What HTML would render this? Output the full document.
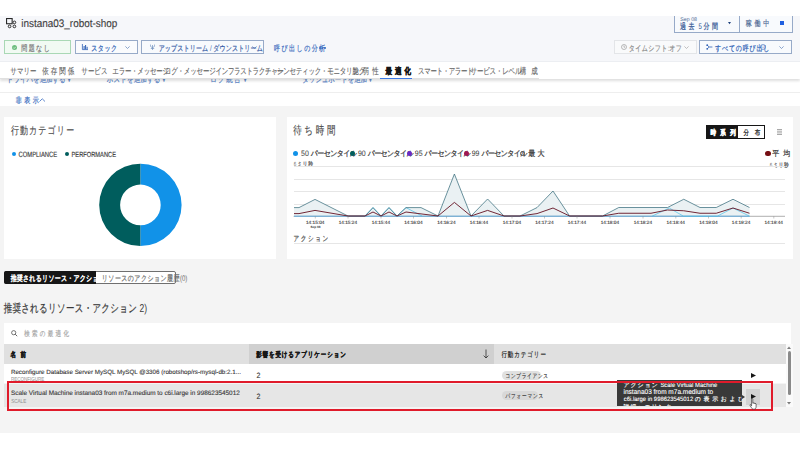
<!DOCTYPE html>
<html><head><meta charset="utf-8">
<style>
*{box-sizing:border-box;margin:0;padding:0}
html,body{width:800px;height:450px;overflow:hidden;background:#fff;font-family:"Liberation Sans",sans-serif;color:#161616}
.a{position:absolute;white-space:nowrap;line-height:1;text-rendering:geometricPrecision}
svg.a{overflow:visible}
</style></head><body>
<div class="a" style="left:0px;top:16px;width:800px;height:45px;background:#f6f7fa;"></div>
<svg class="a" style="left:6.2px;top:17.6px" width="10" height="10" viewBox="0 0 10 10">
  <rect x="0.55" y="0.55" width="5.6" height="5.2" fill="none" stroke="#2a2a2a" stroke-width="1.1"/>
  <circle cx="8.4" cy="4.4" r="1.35" fill="none" stroke="#2a2a2a" stroke-width="1"/>
  <circle cx="3.6" cy="8.4" r="1.35" fill="none" stroke="#2a2a2a" stroke-width="1"/>
  <circle cx="8.4" cy="8.4" r="1.35" fill="none" stroke="#2a2a2a" stroke-width="1"/>
</svg>
<div class="a" id="t1" style="left:21.234px;top:20px;font-size:9.95px;color:#3d3d3d;transform:scaleY(1.1);transform-origin:0 3.577px;-webkit-text-stroke-width:0.1px;">instana03_robot-shop</div>
<div class="a" style="left:673.5px;top:16px;width:119px;height:17px;background:#f8fafd;border:1px solid #97aac8;border-top:none;"></div>
<div class="a" style="left:739px;top:16px;width:1px;height:17px;background:#97aac8;"></div>
<div class="a" id="t2" style="left:680.361px;top:18px;font-size:5.274px;color:#4f6a95;">Sep 08</div>
<div class="a" id="t3" style="left:679.999px;top:24px;font-size:6px;color:#2a4f8f;transform:scaleY(1.35);transform-origin:0 1.936px;"><span style="letter-spacing:2.44px;-webkit-text-stroke-width:0.15px">過去</span> 5 <span style="letter-spacing:2.44px;-webkit-text-stroke-width:0.15px">分間</span></div>
<svg class="a" style="left:727.5px;top:21.6px" width="3" height="2.2" viewBox="0 0 3 2.2"><path d="M0 0h3L1.5 2.2Z" fill="#1c3f7a"/></svg>
<div class="a" id="t4" style="left:745.799px;top:21px;font-size:6px;color:#4f6a95;transform:scaleY(1.35);transform-origin:0 1.936px;"><span style="letter-spacing:2.774px;-webkit-text-stroke-width:0.15px">稼働中</span></div>
<div class="a" style="left:780.2px;top:20.9px;width:3.7px;height:3.8px;background:#1f5fe0;"></div>
<div class="a" style="left:4px;top:40.2px;width:67px;height:13.8px;background:#f1faf3;border:1px solid #a9d8b5;"></div>
<svg class="a" style="left:11.6px;top:44.9px" width="5" height="5" viewBox="0 0 5 5"><circle cx="2.5" cy="2.5" r="2.5" fill="#6cbd7e"/><path d="M1.3 2.6l0.9 0.9 1.6-1.7" stroke="#fff" stroke-width="0.6" fill="none"/></svg>
<div class="a" id="t5" style="left:21.299px;top:46px;font-size:6px;color:#777;transform:scaleY(1.35);transform-origin:0 1.936px;"><span style="letter-spacing:1.398px;-webkit-text-stroke-width:0.15px">問題なし</span></div>
<div class="a" style="left:74.6px;top:40.2px;width:63.6px;height:13.8px;background:#fafbfd;border:1px solid #97aac8;"></div>
<svg class="a" style="left:81.5px;top:44.3px" width="6" height="6" viewBox="0 0 6 6"><path d="M0.4 0v5.6h5.6" stroke="#2d5fb5" stroke-width="0.8" fill="none"/><rect x="1.6" y="2" width="1" height="3.2" fill="#2d5fb5"/><rect x="3.1" y="1" width="1" height="4.2" fill="#2d5fb5"/><rect x="4.6" y="2.8" width="1" height="2.4" fill="#2d5fb5"/></svg>
<div class="a" id="t6" style="left:91.299px;top:46px;font-size:6px;color:#2d5fb5;transform:scaleY(1.35);transform-origin:0 1.936px;"><span style="letter-spacing:0.431px;-webkit-text-stroke-width:0.15px">スタック</span></div>
<svg class="a" style="left:125.2px;top:45.8px" width="5" height="3" viewBox="0 0 5 3"><path d="M0.4 0.4l2.1 2.1 2.1-2.1" stroke="#5a7fb8" stroke-width="0.7" fill="none"/></svg>
<div class="a" style="left:141.2px;top:40.2px;width:123.3px;height:13.8px;background:#f8fafd;border:1px solid #97aac8;"></div>
<svg class="a" style="left:150px;top:44.3px" width="5" height="6" viewBox="0 0 5 6"><path d="M2.5 1v5M0.5 0.6v1.2c0 1 .9 1.6 2 1.6s2-.6 2-1.6V0.6M0.8 4.5h3.4" stroke="#6f8fbf" stroke-width="0.7" fill="none"/></svg>
<div class="a" id="t7" style="left:158.649px;top:46px;font-size:6px;color:#3d62a8;transform:scaleY(1.35);transform-origin:0 1.936px;"><span style="letter-spacing:0.078px;-webkit-text-stroke-width:0.15px">アップストリーム</span> / <span style="letter-spacing:0.078px;-webkit-text-stroke-width:0.15px">ダウンストリーム</span></div>
<svg class="a" style="left:251.5px;top:45.8px" width="5" height="3" viewBox="0 0 5 3"><path d="M0.4 0.4l2.1 2.1 2.1-2.1" stroke="#5a7fb8" stroke-width="0.7" fill="none"/></svg>
<div class="a" id="t8" style="left:273.899px;top:46px;font-size:6px;color:#3a6cc0;transform:scaleY(1.35);transform-origin:0 1.936px;"><span style="letter-spacing:1.492px;-webkit-text-stroke-width:0.15px">呼び出しの分析</span></div>
<div class="a" style="left:319px;top:47px;width:1.8px;height:1.8px;border-radius:50%;background:#3a6cc0"></div>
<div class="a" style="left:321.6px;top:47px;width:1.8px;height:1.8px;border-radius:50%;background:#3a6cc0"></div>
<div class="a" style="left:324.2px;top:47px;width:1.8px;height:1.8px;border-radius:50%;background:#3a6cc0"></div>
<div class="a" style="left:614.2px;top:40.2px;width:83.3px;height:14.3px;background:#f9fafb;border:1px solid #e3e5e8;"></div>
<svg class="a" style="left:620.5px;top:44.2px" width="6" height="6" viewBox="0 0 6 6"><circle cx="3" cy="3" r="2.5" fill="none" stroke="#8d8d8d" stroke-width="0.6"/><path d="M3 1.5V3.2h1.1" stroke="#8d8d8d" stroke-width="0.6" fill="none"/></svg>
<div class="a" id="t9" style="left:628.649px;top:46px;font-size:6px;color:#8d8d8d;transform:scaleY(1.35);transform-origin:0 1.936px;"><span style="letter-spacing:0.361px;-webkit-text-stroke-width:0.15px">タイムシフト</span>:<span style="letter-spacing:0.361px;-webkit-text-stroke-width:0.15px">オフ</span></div>
<svg class="a" style="left:683.8px;top:45.8px" width="5" height="3" viewBox="0 0 5 3"><path d="M0.4 0.4l2.1 2.1 2.1-2.1" stroke="#a8a8a8" stroke-width="0.7" fill="none"/></svg>
<div class="a" style="left:699.3px;top:40.4px;width:93.2px;height:13.8px;background:#f8fafd;border:1px solid #97aac8;"></div>
<svg class="a" style="left:706px;top:44.3px" width="7" height="6" viewBox="0 0 7 6"><circle cx="1.2" cy="1.2" r="0.9" fill="#2d5fb5"/><circle cx="1.2" cy="4.8" r="0.9" fill="#2d5fb5"/><path d="M1.2 1.2L3.2 3 1.2 4.8M3.2 3h3.2" stroke="#2d5fb5" stroke-width="0.8" fill="none"/></svg>
<div class="a" id="t10" style="left:715.099px;top:46px;font-size:6px;color:#2d5fb5;transform:scaleY(1.35);transform-origin:0 1.936px;"><span style="letter-spacing:0.786px;-webkit-text-stroke-width:0.15px">すべての呼び出し</span></div>
<svg class="a" style="left:759.6px;top:44.2px" width="6" height="6" viewBox="0 0 12 12"><circle cx="6" cy="6" r="5.2" fill="none" stroke="#2d5fb5" stroke-width="1"/><path d="M6 5.2v3.8" stroke="#2d5fb5" stroke-width="1.1"/><circle cx="6" cy="3.4" r="0.7" fill="#2d5fb5"/></svg>
<svg class="a" style="left:779.2px;top:45.8px" width="5" height="3" viewBox="0 0 5 3"><path d="M0.4 0.4l2.1 2.1 2.1-2.1" stroke="#5a7fb8" stroke-width="0.7" fill="none"/></svg>
<div class="a" style="left:0px;top:61px;width:800px;height:45px;background:#fff;"></div>
<div class="a" id="t11" style="left:6.849px;top:77px;font-size:6.5px;color:#5a85c8;transform:scaleY(1.35);transform-origin:0 1.764px;"><span style="letter-spacing:-0.085px;-webkit-text-stroke-width:0.15px">ドライバを追加する</span> <span style="letter-spacing:-0.085px;-webkit-text-stroke-width:0.15px">▾</span></div>
<div class="a" id="t12" style="left:106.849px;top:77px;font-size:6.5px;color:#5a85c8;transform:scaleY(1.35);transform-origin:0 1.764px;"><span style="letter-spacing:0.076px;-webkit-text-stroke-width:0.15px">ホストを追加する</span> <span style="letter-spacing:0.076px;-webkit-text-stroke-width:0.15px">▾</span></div>
<div class="a" id="t13" style="left:210.349px;top:77px;font-size:6.5px;color:#5a85c8;transform:scaleY(1.35);transform-origin:0 1.764px;"><span style="letter-spacing:1.275px;-webkit-text-stroke-width:0.15px">ログ統合</span> <span style="letter-spacing:1.275px;-webkit-text-stroke-width:0.15px">▾</span></div>
<div class="a" id="t14" style="left:302.349px;top:77px;font-size:6.5px;color:#5a85c8;transform:scaleY(1.35);transform-origin:0 1.764px;"><span style="letter-spacing:-0.156px;-webkit-text-stroke-width:0.15px">ダッシュボードを追加</span> <span style="letter-spacing:-0.156px;-webkit-text-stroke-width:0.15px">▾</span></div>
<div class="a" style="left:0px;top:92px;width:800px;height:1px;background:#eeeeee;"></div>
<div class="a" id="t15" style="left:15.649px;top:98px;font-size:6px;color:#3a6cc0;transform:scaleY(1.35);transform-origin:0 1.936px;"><span style="letter-spacing:2.594px;-webkit-text-stroke-width:0.15px">非表示</span></div>
<svg class="a" style="left:38.6px;top:97.6px" width="6.5" height="4" viewBox="0 0 6.5 4"><path d="M0.5 3.5L3.25 0.8 6 3.5" stroke="#3a6cc0" stroke-width="0.8" fill="none"/></svg>
<div class="a" style="left:0px;top:61px;width:800px;height:18px;background:#fff;box-shadow:0 2px 2.5px rgba(0,0,0,.13);border-top:1px solid #eceef2;"></div>
<div class="a" style="left:0px;top:78px;width:539px;height:1px;background:#e0e0e0;"></div>
<div class="a" id="t16" style="left:10.349px;top:69px;font-size:6.5px;color:#616161;transform:scaleY(1.35);transform-origin:0 1.764px;"><span style="letter-spacing:-0.069px;-webkit-text-stroke-width:0.08px">サマリー</span></div>
<div class="a" id="t17" style="left:42.349px;top:69px;font-size:6.5px;color:#616161;transform:scaleY(1.35);transform-origin:0 1.764px;"><span style="letter-spacing:1.931px;-webkit-text-stroke-width:0.08px">依存関係</span></div>
<div class="a" id="t18" style="left:81.349px;top:69px;font-size:6.5px;color:#616161;transform:scaleY(1.35);transform-origin:0 1.764px;"><span style="letter-spacing:-0.069px;-webkit-text-stroke-width:0.08px">サービス</span></div>
<div class="a" id="t19" style="left:112.349px;top:69px;font-size:6.5px;color:#616161;transform:scaleY(1.35);transform-origin:0 1.764px;"><span style="letter-spacing:-0.321px;-webkit-text-stroke-width:0.08px">エラー・メッセージ</span></div>
<div class="a" id="t20" style="left:164.849px;top:69px;font-size:6.5px;color:#616161;transform:scaleY(1.35);transform-origin:0 1.764px;"><span style="letter-spacing:-0.28px;-webkit-text-stroke-width:0.08px">ログ・メッセージ</span></div>
<div class="a" id="t21" style="left:215.599px;top:69px;font-size:6.5px;color:#616161;transform:scaleY(1.35);transform-origin:0 1.764px;"><span style="letter-spacing:-0.482px;-webkit-text-stroke-width:0.08px">インフラストラクチャー</span></div>
<div class="a" id="t22" style="left:276.849px;top:69px;font-size:6.5px;color:#616161;transform:scaleY(1.35);transform-origin:0 1.764px;"><span style="letter-spacing:-0.342px;-webkit-text-stroke-width:0.08px">シンセティック・モニタリング</span></div>
<div class="a" id="t23" style="left:352.349px;top:69px;font-size:6.5px;color:#616161;transform:scaleY(1.35);transform-origin:0 1.764px;"><span style="letter-spacing:3.458px;-webkit-text-stroke-width:0.08px">脆弱性</span></div>
<div class="a" id="t24" style="left:385.599px;top:69px;font-size:6.5px;color:#161616;font-weight:bold;transform:scaleY(1.35);transform-origin:0 1.764px;"><span style="letter-spacing:2.958px;-webkit-text-stroke-width:0.35px">最適化</span></div>
<div class="a" id="t25" style="left:418.099px;top:69px;font-size:6.5px;color:#616161;transform:scaleY(1.35);transform-origin:0 1.764px;"><span style="letter-spacing:-0.478px;-webkit-text-stroke-width:0.08px">スマート・アラート</span></div>
<div class="a" id="t26" style="left:470.599px;top:69px;font-size:6.5px;color:#616161;transform:scaleY(1.35);transform-origin:0 1.764px;"><span style="letter-spacing:-0.28px;-webkit-text-stroke-width:0.08px">サービス・レベル</span></div>
<div class="a" id="t27" style="left:519.849px;top:69px;font-size:6.5px;color:#616161;transform:scaleY(1.35);transform-origin:0 1.764px;"><span style="letter-spacing:4.797px;-webkit-text-stroke-width:0.08px">構成</span></div>
<div class="a" style="left:380px;top:77.5px;width:32px;height:1.7px;background:#3d7be8;"></div>
<div class="a" style="left:0px;top:106px;width:800px;height:326.5px;background:#f4f4f4;"></div>
<div class="a" style="left:3.8px;top:116.5px;width:272.7px;height:142.8px;background:#fff;"></div>
<div class="a" id="t28" style="left:10.899px;top:127px;font-size:8px;color:#4a4a4a;transform:scaleY(1.35);transform-origin:0 3.248px;"><span style="letter-spacing:1.083px;-webkit-text-stroke-width:0.1px">行動カテゴリー</span></div>
<div class="a" style="left:11.5px;top:151.7px;width:4px;height:4px;border-radius:50%;background:#1192e8"></div>
<div class="a" id="t29" style="left:18.502px;top:153px;font-size:5.865px;color:#393939;transform:scaleY(1.3);transform-origin:0 0.982px;-webkit-text-stroke-width:0.12px;">COMPLIANCE</div>
<div class="a" style="left:64.5px;top:151.7px;width:4px;height:4px;border-radius:50%;background:#005d5d"></div>
<div class="a" id="t30" style="left:71.529px;top:153px;font-size:5.739px;color:#393939;transform:scaleY(1.3);transform-origin:0 1.026px;-webkit-text-stroke-width:0.12px;">PERFORMANCE</div>
<svg class="a" style="left:0;top:0" width="800" height="450"><path d="M140.4 163.7A41.2 41.2 0 0 1 140.4 246.10000000000002L140.4 225.20000000000002A20.3 20.3 0 0 0 140.4 184.6Z" fill="#1192e8"/><path d="M140.4 163.7A41.2 41.2 0 0 0 140.4 246.10000000000002L140.4 225.20000000000002A20.3 20.3 0 0 1 140.4 184.6Z" fill="#005d5d"/></svg>
<div class="a" style="left:287px;top:117px;width:505.6px;height:142.3px;background:#fff;"></div>
<div class="a" id="t31" style="left:293.149px;top:126px;font-size:8.5px;color:#4a4a4a;transform:scaleY(1.35);transform-origin:0 4.076px;"><span style="letter-spacing:2.731px;-webkit-text-stroke-width:0.1px">待ち時間</span></div>
<div class="a" style="left:705.5px;top:124.5px;width:32.1px;height:14.2px;background:#161616;"></div>
<div class="a" style="left:737.6px;top:124.5px;width:27px;height:14.2px;background:#fff;border:1px solid #161616;border-left:none;"></div>
<div class="a" id="t32" style="left:710.449px;top:131px;font-size:5.5px;color:#fff;font-weight:bold;transform:scaleY(1.35);transform-origin:0 1.108px;"><span style="letter-spacing:4.364px;-webkit-text-stroke-width:0.3px">時系列</span></div>
<div class="a" id="t33" style="left:743.449px;top:131px;font-size:5.5px;color:#161616;transform:scaleY(1.35);transform-origin:0 1.108px;"><span style="letter-spacing:5.844px;-webkit-text-stroke-width:0.15px">分布</span></div>
<svg class="a" style="left:776.5px;top:129.2px" width="5" height="6" viewBox="0 0 5 6"><path d="M0 0.5h5M0 2.2h5M0 3.9h5M0 5.5h5" stroke="#6f6f6f" stroke-width="0.6"/></svg>
<div class="a" style="left:293.25px;top:150.5px;width:5.2px;height:5.2px;border-radius:50%;background:#1192e8"></div>
<div class="a" id="t34" style="left:301.12px;top:151px;font-size:7px;color:#393939;transform:scaleY(1.12);transform-origin:0 2.592px;">50 <span style="letter-spacing:-0.65px;-webkit-text-stroke-width:0.2px">パーセンタイル</span></div>
<div class="a" style="left:349.8px;top:150.5px;width:5.2px;height:5.2px;border-radius:50%;background:#005d5d"></div>
<div class="a" id="t35" style="left:357.922px;top:151px;font-size:7px;color:#393939;transform:scaleY(1.12);transform-origin:0 2.592px;">90 <span style="letter-spacing:-0.642px;-webkit-text-stroke-width:0.2px">パーセンタイル</span></div>
<div class="a" style="left:406.7px;top:150.5px;width:5.2px;height:5.2px;border-radius:50%;background:#6929c4"></div>
<div class="a" id="t36" style="left:414.772px;top:151px;font-size:7px;color:#393939;transform:scaleY(1.12);transform-origin:0 2.592px;">95 <span style="letter-spacing:-0.642px;-webkit-text-stroke-width:0.2px">パーセンタイル</span></div>
<div class="a" style="left:463.9px;top:150.5px;width:5.2px;height:5.2px;border-radius:50%;background:#9f1853"></div>
<div class="a" id="t37" style="left:471.672px;top:151px;font-size:7px;color:#393939;transform:scaleY(1.12);transform-origin:0 2.592px;">99 <span style="letter-spacing:-0.642px;-webkit-text-stroke-width:0.2px">パーセンタイル</span></div>
<div class="a" style="left:519.8px;top:150.5px;width:5.2px;height:5.2px;border-radius:50%;border:1px solid #525252"></div>
<div class="a" id="t38" style="left:528.199px;top:151px;font-size:7px;color:#393939;transform:scaleY(1.12);transform-origin:0 2.592px;"><span style="letter-spacing:2.196px;-webkit-text-stroke-width:0.2px">最大</span></div>
<div class="a" style="left:765.4px;top:150.5px;width:5.2px;height:5.2px;border-radius:50%;background:#750e13"></div>
<div class="a" id="t39" style="left:772.299px;top:151px;font-size:7px;color:#393939;transform:scaleY(1.12);transform-origin:0 2.592px;"><span style="letter-spacing:3.892px;-webkit-text-stroke-width:0.2px">平均</span></div>
<div class="a" id="t40" style="left:293.671px;top:162px;font-size:4.5px;color:#6f6f6f;transform:scaleY(1.35);transform-origin:0 1.452px;">6 <span style="letter-spacing:0.841px;-webkit-text-stroke-width:0.25px">ミリ秒</span></div>
<div class="a" id="t41" style="left:769.771px;top:163px;font-size:4.5px;color:#6f6f6f;transform:scaleY(1.35);transform-origin:0 1.452px;">6 <span style="letter-spacing:0.641px;-webkit-text-stroke-width:0.25px">ミリ秒</span></div>
<div class="a" style="left:293.6px;top:166.25px;width:491.4px;height:1px;background:#e6e6e6;"></div>
<div class="a" style="left:293.6px;top:178.7px;width:491.4px;height:1px;background:#e6e6e6;"></div>
<div class="a" style="left:293.6px;top:191px;width:491.4px;height:1px;background:#e6e6e6;"></div>
<div class="a" style="left:293.6px;top:203.5px;width:491.4px;height:1px;background:#e6e6e6;"></div>
<svg class="a" style="left:0;top:0" width="800" height="450"><path d="M294 207.6L299 207.6L315 199.4L348 216L365 216L373 207.6L381 216L389 207.6L397 216L406 207.6L421 207.6L438 216L454.4 174L471 216L487.6 199L504 216L520 216L537 207.6L553 191L569.6 216L602.5 216L618.75 207.5L667.5 207.5L683.75 199.25L700 207.5L716.25 207.5L733 199.25L749.5 207.5L749.5 216L294 216Z" fill="#eaf1f3"/><line x1="293.6" y1="216.3" x2="785" y2="216.3" stroke="#8d8d8d" stroke-width="0.7"/><path d="M294 216.2H749.5" stroke="#4aa8e8" stroke-width="0.8" fill="none"/><path d="M365 216L373 207.6L381 216L389 207.6L397 216L406 207.6L422 216M652 216.2L669.25 208L683.5 216.2L717.25 216.2L733 208L749.5 216.2" stroke="#4cc0e8" stroke-width="0.7" fill="none"/><path d="M294 207.6L299 207.6L315 199.4L348 216L365 216L373 207.6L381 216L389 207.6L397 216L406 207.6L421 207.6L438 216L454.4 174L471 216L487.6 199L504 216L520 216L537 207.6L553 191L569.6 216L602.5 216L618.75 207.5L667.5 207.5L683.75 199.25L700 207.5L716.25 207.5L733 199.25L749.5 207.5" stroke="#3b6f7d" stroke-width="0.75" fill="none"/><path d="M294 213.6L299 213.6L315 210.4L348 216L365 216L373 212L381 216L389 212L397 216L406 212L438 216L454.4 202.4L471 216L487.6 210.4L504 216L520 216L537 213.6L553 208L569.6 216L602.5 216L618.75 213.25L651 213.25L667.5 210L683.75 210.75L700 213.25L716.25 213.25L733 208L749.5 213.25" stroke="#6a1c2c" stroke-width="0.95" fill="none"/><line x1="315.3" y1="216.3" x2="315.3" y2="218.5" stroke="#8d8d8d" stroke-width="0.5"/><line x1="348" y1="216.3" x2="348" y2="218.5" stroke="#8d8d8d" stroke-width="0.5"/><line x1="381" y1="216.3" x2="381" y2="218.5" stroke="#8d8d8d" stroke-width="0.5"/><line x1="413.5" y1="216.3" x2="413.5" y2="218.5" stroke="#8d8d8d" stroke-width="0.5"/><line x1="446.5" y1="216.3" x2="446.5" y2="218.5" stroke="#8d8d8d" stroke-width="0.5"/><line x1="479" y1="216.3" x2="479" y2="218.5" stroke="#8d8d8d" stroke-width="0.5"/><line x1="512" y1="216.3" x2="512" y2="218.5" stroke="#8d8d8d" stroke-width="0.5"/><line x1="544.5" y1="216.3" x2="544.5" y2="218.5" stroke="#8d8d8d" stroke-width="0.5"/><line x1="577" y1="216.3" x2="577" y2="218.5" stroke="#8d8d8d" stroke-width="0.5"/><line x1="610" y1="216.3" x2="610" y2="218.5" stroke="#8d8d8d" stroke-width="0.5"/><line x1="643" y1="216.3" x2="643" y2="218.5" stroke="#8d8d8d" stroke-width="0.5"/><line x1="675.8" y1="216.3" x2="675.8" y2="218.5" stroke="#8d8d8d" stroke-width="0.5"/><line x1="708.5" y1="216.3" x2="708.5" y2="218.5" stroke="#8d8d8d" stroke-width="0.5"/><line x1="741.2" y1="216.3" x2="741.2" y2="218.5" stroke="#8d8d8d" stroke-width="0.5"/><line x1="773.8" y1="216.3" x2="773.8" y2="218.5" stroke="#8d8d8d" stroke-width="0.5"/></svg>
<div class="a" id="t42" style="left:305.938px;top:222px;font-size:4.754px;color:#393939;-webkit-text-stroke-width:0.12px;">14:15:04</div>
<div class="a" id="t43" style="left:338.638px;top:222px;font-size:4.754px;color:#393939;-webkit-text-stroke-width:0.12px;">14:15:24</div>
<div class="a" id="t44" style="left:371.638px;top:222px;font-size:4.754px;color:#393939;-webkit-text-stroke-width:0.12px;">14:15:44</div>
<div class="a" id="t45" style="left:404.138px;top:222px;font-size:4.754px;color:#393939;-webkit-text-stroke-width:0.12px;">14:16:04</div>
<div class="a" id="t46" style="left:437.138px;top:222px;font-size:4.754px;color:#393939;-webkit-text-stroke-width:0.12px;">14:16:24</div>
<div class="a" id="t47" style="left:469.638px;top:222px;font-size:4.754px;color:#393939;-webkit-text-stroke-width:0.12px;">14:16:44</div>
<div class="a" id="t48" style="left:502.638px;top:222px;font-size:4.754px;color:#393939;-webkit-text-stroke-width:0.12px;">14:17:04</div>
<div class="a" id="t49" style="left:535.138px;top:222px;font-size:4.754px;color:#393939;-webkit-text-stroke-width:0.12px;">14:17:24</div>
<div class="a" id="t50" style="left:567.638px;top:222px;font-size:4.754px;color:#393939;-webkit-text-stroke-width:0.12px;">14:17:44</div>
<div class="a" id="t51" style="left:600.638px;top:222px;font-size:4.754px;color:#393939;-webkit-text-stroke-width:0.12px;">14:18:04</div>
<div class="a" id="t52" style="left:633.638px;top:222px;font-size:4.754px;color:#393939;-webkit-text-stroke-width:0.12px;">14:18:24</div>
<div class="a" id="t53" style="left:666.438px;top:222px;font-size:4.754px;color:#393939;-webkit-text-stroke-width:0.12px;">14:18:44</div>
<div class="a" id="t54" style="left:699.138px;top:222px;font-size:4.754px;color:#393939;-webkit-text-stroke-width:0.12px;">14:19:04</div>
<div class="a" id="t55" style="left:731.838px;top:222px;font-size:4.754px;color:#393939;-webkit-text-stroke-width:0.12px;">14:19:24</div>
<div class="a" id="t56" style="left:764.438px;top:222px;font-size:4.754px;color:#393939;-webkit-text-stroke-width:0.12px;">14:19:44</div>
<div class="a" id="t57" style="left:310.409px;top:226px;font-size:3.16px;color:#393939;font-weight:bold;">Sep 08</div>
<div class="a" id="t58" style="left:293.439px;top:237px;font-size:5.6px;color:#525252;transform:scaleY(1.35);transform-origin:0 1.074px;"><span style="letter-spacing:1.534px;-webkit-text-stroke-width:0.15px">アクション</span></div>
<div class="a" style="left:293.6px;top:242.5px;width:491.4px;height:1px;background:#e6e6e6;"></div>
<div class="a" style="left:4px;top:270.6px;width:171.5px;height:13.5px;background:#fff;border:1px solid #6f6f6f;border-radius:2px;"></div>
<div class="a" style="left:4px;top:270.6px;width:91.6px;height:13.5px;background:#161616;border-radius:2px 0 0 2px;"></div>
<div class="a" id="t59" style="left:10.649px;top:276px;font-size:6px;color:#fff;transform:scaleY(1.35);transform-origin:0 1.936px;"><span style="letter-spacing:0.196px;-webkit-text-stroke-width:0.35px">推奨されるリソース・アクション</span> 2)</div>
<div class="a" id="t60" style="left:101.799px;top:276px;font-size:6px;color:#6f6f6f;transform:scaleY(1.35);transform-origin:0 1.936px;"><span style="letter-spacing:0.402px;-webkit-text-stroke-width:0.15px">リソースのアクション履歴</span>(0)</div>
<div class="a" id="t61" style="left:3.649px;top:304px;font-size:8.5px;color:#393939;transform:scaleY(1.35);transform-origin:0 4.076px;"><span style="letter-spacing:0.255px;-webkit-text-stroke-width:0.15px">推奨されるリソース・アクション</span> 2)</div>
<div class="a" style="left:3.8px;top:322.5px;width:787.2px;height:21.3px;background:#fff;"></div>
<svg class="a" style="left:10.8px;top:330px" width="6.5" height="6.5" viewBox="0 0 6.5 6.5"><circle cx="2.7" cy="2.7" r="2.1" fill="none" stroke="#525252" stroke-width="0.8"/><path d="M4.2 4.2L6.2 6.2" stroke="#525252" stroke-width="0.9"/></svg>
<div class="a" id="t62" style="left:24.199px;top:332px;font-size:5.5px;color:#a8a8a8;transform:scaleY(1.35);transform-origin:0 1.108px;"><span style="letter-spacing:2.318px;-webkit-text-stroke-width:0.15px">検索の最適化</span></div>
<div class="a" style="left:3.8px;top:343.8px;width:781.8px;height:20.4px;background:#e0e0e0;"></div>
<div class="a" style="left:248.8px;top:343.8px;width:245.2px;height:20.4px;background:#d0d0d0;"></div>
<div class="a" id="t63" style="left:10.449px;top:353px;font-size:5.5px;color:#161616;font-weight:bold;transform:scaleY(1.35);transform-origin:0 1.108px;"><span style="letter-spacing:4.594px;-webkit-text-stroke-width:0.2px">名前</span></div>
<div class="a" id="t64" style="left:256.249px;top:353px;font-size:5.5px;color:#161616;font-weight:bold;transform:scaleY(1.35);transform-origin:0 1.108px;"><span style="letter-spacing:0.872px;-webkit-text-stroke-width:0.2px">影響を受けるアプリケーション</span></div>
<svg class="a" style="left:483px;top:348.5px" width="6" height="10" viewBox="0 0 6 10"><path d="M3 0.5v8.5M0.6 6.6L3 9l2.4-2.4" stroke="#262626" stroke-width="0.75" fill="none"/></svg>
<div class="a" id="t65" style="left:501.449px;top:353px;font-size:5.5px;color:#262626;transform:scaleY(1.35);transform-origin:0 1.108px;"><span style="letter-spacing:0.904px;-webkit-text-stroke-width:0.15px">行動カテゴリー</span></div>
<div class="a" style="left:3.8px;top:364.2px;width:781.8px;height:19.3px;background:#fff;"></div>
<div class="a" id="t66" style="left:10.888px;top:370px;font-size:6.24px;color:#393939;-webkit-text-stroke-width:0.12px;">Reconfigure Database Server MySQL MySQL @3306 (robotshop/rs-mysql-db:2.1...</div>
<div class="a" id="t67" style="left:11.031px;top:378px;font-size:4.494px;color:#8d8d8d;transform:scaleY(1.3);transform-origin:0 1.454px;">RECONFIGURE</div>
<div class="a" id="t68" style="left:256.447px;top:373px;font-size:7.023px;color:#393939;transform:scaleY(1.1);transform-origin:0 2.584px;-webkit-text-stroke-width:0.1px;">2</div>
<div class="a" style="left:502px;top:370.8px;width:38.8px;height:8.8px;background:#e0e0e0;border-radius:4.4px;"></div>
<div class="a" id="t69" style="left:505.54px;top:374px;font-size:4.6px;color:#393939;transform:scaleY(1.35);transform-origin:0 1.418px;"><span style="letter-spacing:0.693px;-webkit-text-stroke-width:0.1px">コンプライアンス</span></div>
<svg class="a" style="left:750.8px;top:373.2px" width="5" height="5" viewBox="0 0 5 5"><path d="M0 0L5 2.5 0 5Z" fill="#161616"/></svg>
<div class="a" style="left:3.8px;top:383.5px;width:781.8px;height:23.3px;background:#e6e6e6;"></div>
<div class="a" id="t70" style="left:11.109px;top:391px;font-size:6.405px;color:#393939;-webkit-text-stroke-width:0.12px;">Scale Virtual Machine instana03 from m7a.medium to c6i.large in 998623545012</div>
<div class="a" id="t71" style="left:11.192px;top:400px;font-size:4.584px;color:#8d8d8d;transform:scaleY(1.25);transform-origin:0 1.423px;">SCALE</div>
<div class="a" id="t72" style="left:256.447px;top:394px;font-size:7.023px;color:#393939;transform:scaleY(1.1);transform-origin:0 2.584px;-webkit-text-stroke-width:0.1px;">2</div>
<div class="a" style="left:502px;top:391.2px;width:36px;height:8.8px;background:#d8d8d8;border-radius:4.4px;"></div>
<div class="a" id="t73" style="left:505.54px;top:394px;font-size:4.6px;color:#393939;transform:scaleY(1.35);transform-origin:0 1.418px;"><span style="letter-spacing:0.801px;-webkit-text-stroke-width:0.1px">パフォーマンス</span></div>
<div class="a" style="left:746px;top:389px;width:13.6px;height:15.5px;background:#d2d2d2;"></div>
<svg class="a" style="left:750.8px;top:393.6px" width="5" height="5" viewBox="0 0 5 5"><path d="M0 0L5 2.5 0 5Z" fill="#161616"/></svg>
<div class="a" style="left:786px;top:344px;width:6.5px;height:63px;background:#fafafa;"></div>
<div class="a" style="left:787.6px;top:351px;width:3.2px;height:43.5px;background:#8a8a8a;border-radius:1.6px;"></div>
<svg class="a" style="left:787.2px;top:346px" width="4" height="3" viewBox="0 0 4 3"><path d="M0 3L2 0.4 4 3Z" fill="#7a7a7a"/></svg>
<svg class="a" style="left:787.2px;top:401.5px" width="4" height="3" viewBox="0 0 4 3"><path d="M0 0L2 2.6 4 0Z" fill="#7a7a7a"/></svg>
<div class="a" style="left:617px;top:380px;width:125.4px;height:26.4px;background:#393939;overflow:hidden"><div class="a" id="t74" style="left:6.409px;top:4px;font-size:5.9px;color:#fff;transform:scaleY(1.05);transform-origin:0 0.97px;-webkit-text-stroke-width:0.1px;"><span style="letter-spacing:1.047px;-webkit-text-stroke-width:0.15px">アクション</span> Scale Virtual Machine</div>
<div class="a" id="t75" style="left:6.564px;top:10px;font-size:6.515px;color:#fff;transform:scaleY(1.05);transform-origin:0 1.759px;-webkit-text-stroke-width:0.1px;">instana03 from m7a.medium to</div>
<div class="a" id="t76" style="left:6.749px;top:18px;font-size:5.9px;color:#fff;transform:scaleY(1.05);transform-origin:0 0.97px;-webkit-text-stroke-width:0.1px;">c6i.large in 998623545012 <span style="letter-spacing:2.729px;-webkit-text-stroke-width:0.15px">の表示および</span></div>
<div class="a" id="t77" style="left:6.409px;top:26px;font-size:5.9px;color:#fff;transform:scaleY(1.05);transform-origin:0 0.97px;-webkit-text-stroke-width:0.1px;"><span style="letter-spacing:1.042px;-webkit-text-stroke-width:0.15px">詳細へのリンク</span></div>
</div>
<svg class="a" style="left:742.2px;top:394.5px" width="3" height="4" viewBox="0 0 3 4"><path d="M0 0L3 2 0 4Z" fill="#393939"/></svg>
<div class="a" style="left:6.8px;top:381.4px;width:766.4px;height:29.2px;border:2px solid #e01b2b;"></div>
<svg class="a" style="left:749px;top:397.5px" width="10" height="12" viewBox="0 0 10 12">
<path d="M2.6 1.1c0-.8 1.2-.8 1.2 0V5.2c0-.5 1.1-.5 1.1 0v.3c0-.5 1.1-.5 1.1 0v.4c0-.5 1.1-.5 1.1.1v2.8c0 1.4-.7 2.4-1.8 2.4H4.2C3.5 11.2 3 10.6 2.4 9.6L1 7.4c-.4-.6.3-1.1.8-.6L2.6 7.8Z" fill="#fff" stroke="#1a1a1a" stroke-width="0.6"/>
</svg>
</body></html>
